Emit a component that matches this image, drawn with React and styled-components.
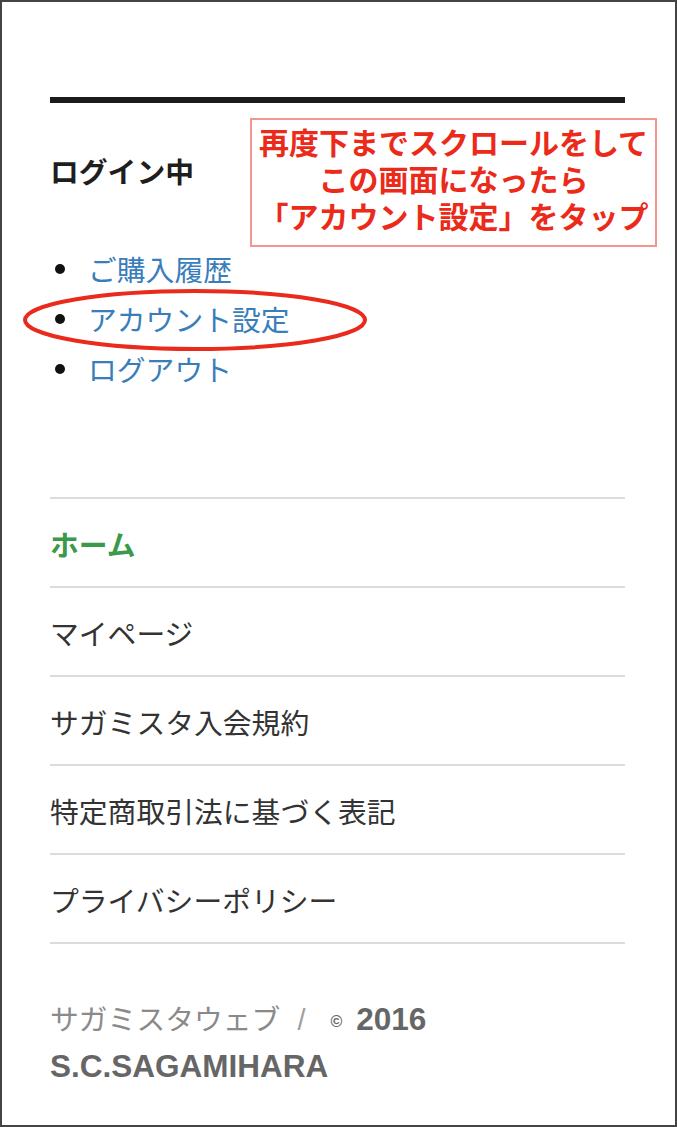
import styled, { createGlobalStyle } from "styled-components";

const GlobalStyle = createGlobalStyle`
  html, body {
    margin: 0;
    padding: 0;
    background: #fff;
  }
  body {
    font-family: "Noto Sans CJK JP", "Liberation Sans", sans-serif;
  }
`;

const accountLinks = ["ご購入履歴", "アカウント設定", "ログアウト"];

const navItems = [
  { label: "ホーム", current: true },
  { label: "マイページ" },
  { label: "サガミスタ入会規約" },
  { label: "特定商取引法に基づく表記" },
  { label: "プライバシーポリシー" },
];

const App = () => {
  return (
    <>
      <GlobalStyle />
      <Frame>
        <TopBar />
        <LoginHeading>ログイン中</LoginHeading>
        <AccountList>
          {accountLinks.map((label) => (
            <AccountItem key={label}>
              <AccountLink href="#">{label}</AccountLink>
            </AccountItem>
          ))}
        </AccountList>

        <NavList>
          {navItems.map((item) => (
            <NavItem key={item.label}>
              <NavLink href="#" $current={item.current}>
                {item.label}
              </NavLink>
            </NavItem>
          ))}
        </NavList>

        <Footer>
          <SiteName>サガミスタウェブ</SiteName>
          <Separator>/</Separator>
          <Copyright>
            <CopyMark>©</CopyMark>2016 S.C.SAGAMIHARA
          </Copyright>
        </Footer>

        <Callout>
          <span>再度下までスクロールをして</span>
          <span>この画面になったら</span>
          <span>「アカウント設定」をタップ</span>
        </Callout>
        <Highlight viewBox="0 0 346 64" aria-hidden="true">
          <ellipse
            cx="173"
            cy="32"
            rx="170"
            ry="29"
            fill="none"
            stroke="#ea2a1c"
            strokeWidth="4"
          />
        </Highlight>
      </Frame>
    </>
  );
};

export default App;

const Frame = styled.div`
  position: relative;
  width: 677px;
  height: 1127px;
  box-sizing: border-box;
  border: 2px solid #444;
  padding: 95px 50px 0 48px;
  background: #fff;
  overflow: hidden;
`;

const TopBar = styled.div`
  height: 6px;
  background: #1b1b1b;
`;

const LoginHeading = styled.h2`
  margin: 48px 0 0;
  font-size: 28.8px;
  line-height: 40px;
  font-weight: 700;
  color: #1e1e1e;
`;

const AccountList = styled.ul`
  list-style: none;
  margin: 53px 0 0;
  padding: 0;
`;

const AccountItem = styled.li`
  position: relative;
  padding-left: 38px;
  font-size: 28.8px;
  line-height: 50px;

  &::before {
    content: "";
    position: absolute;
    left: 5px;
    top: 20px;
    width: 10px;
    height: 10px;
    border-radius: 50%;
    background: #111;
  }
`;

const AccountLink = styled.a`
  color: #3a7dbb;
  text-decoration: none;
`;

const NavList = styled.ul`
  list-style: none;
  margin: 103px 0 0;
  padding: 0;
  border-bottom: 2px solid #dcdcdc;
`;

const NavItem = styled.li`
  display: flex;
  align-items: center;
  height: 87px;
  border-top: 2px solid #dcdcdc;
`;

const NavLink = styled.a`
  padding-top: 3px;
  font-size: 28.8px;
  line-height: 40px;
  font-weight: ${(p) => (p.$current ? 700 : 400)};
  color: ${(p) => (p.$current ? "#3a9a4a" : "#333")};
  text-decoration: none;
`;

const Footer = styled.p`
  margin: 52px 0 0;
  line-height: 43px;
  font-size: 28.8px;
`;

const SiteName = styled.span`
  color: #8a8a8a;
`;

const Separator = styled.span`
  margin: 0 24px 0 17px;
  color: #a0a0a0;
  font-family: "Liberation Sans", sans-serif;
`;

const Copyright = styled.span`
  font-family: "Liberation Sans", Arial, sans-serif;
  font-size: 31.5px;
  font-weight: 700;
  color: #666;
`;

const CopyMark = styled.span`
  margin: 0 14px 0 1px;
  font-size: 16px;
  vertical-align: 3px;
`;

const Callout = styled.div`
  position: absolute;
  left: 248px;
  top: 116px;
  width: 407px;
  height: 129px;
  box-sizing: border-box;
  border: 2px solid #f2968f;
  padding-bottom: 8px;
  display: flex;
  flex-direction: column;
  align-items: center;
  justify-content: center;
  font-size: 30px;
  line-height: 37px;
  font-weight: 700;
  color: #ec2a1a;
  white-space: nowrap;
`;

const Highlight = styled.svg`
  position: absolute;
  left: 20px;
  top: 286px;
  width: 346px;
  height: 64px;
  overflow: visible;
`;
